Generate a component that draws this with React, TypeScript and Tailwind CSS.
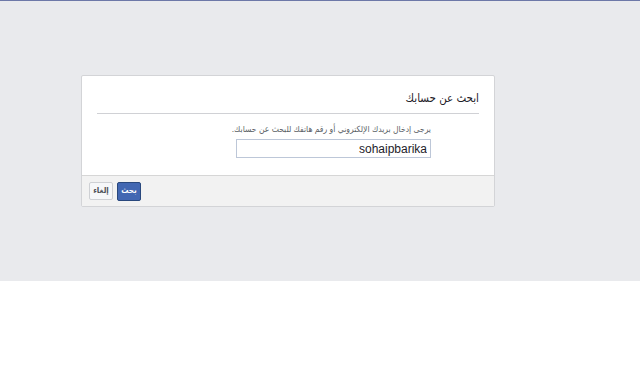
import { useState } from 'react'

export default function App() {
  const [value, setValue] = useState('sohaipbarika')

  return (
    <div className="min-h-screen bg-white" style={{ fontFamily: '"Liberation Sans", "DejaVu Sans Condensed", "DejaVu Sans", sans-serif' }}>
      <div className="h-[281px] bg-[#e9eaed] border-t border-[#6d78a8]">
        <div dir="rtl" className="ml-[81px] mt-[74px] w-[414px] bg-white border border-[#d3d4d7] rounded-[2px]">
          {/* header */}
          <div className="mx-[15px] pt-[13px] pb-[6px] border-b border-[#d0d1d5]">
            <h2 className="text-[11.5px] leading-[18px] text-[#1d2129] font-normal">ابحث عن حسابك</h2>
          </div>

          {/* body */}
          <div className="pr-[63px] pt-[9px] pb-[17px]">
            <p className="text-[8.5px] leading-[13px] text-[#5b5f66] mb-[3px]">
              يرجى إدخال بريدك الإلكتروني أو رقم هاتفك للبحث عن حسابك.
            </p>
            <input
              dir="ltr"
              value={value}
              onChange={(e) => setValue(e.target.value)}
              className="block w-[195px] h-[19px] border border-[#bdc7d8] px-[3px] text-right text-[12px] text-[#1d2129] outline-none"
            />
          </div>

          {/* footer */}
          <div dir="ltr" className="flex gap-[4px] h-[31px] items-center pl-[7px] bg-[#f2f2f2] border-t border-[#d6d6d6]">
            <button className="h-[18px] w-[24px] text-[8px] font-bold text-[#4b4f56] bg-[#f6f7f9] border border-[#ced0d4] rounded-[2px]">
              إلغاء
            </button>
            <button className="h-[19px] w-[24px] text-[8px] font-bold text-white bg-[#4267b2] border border-[#29487d] rounded-[2px]">
              بحث
            </button>
          </div>
        </div>
      </div>
    </div>
  )
}
